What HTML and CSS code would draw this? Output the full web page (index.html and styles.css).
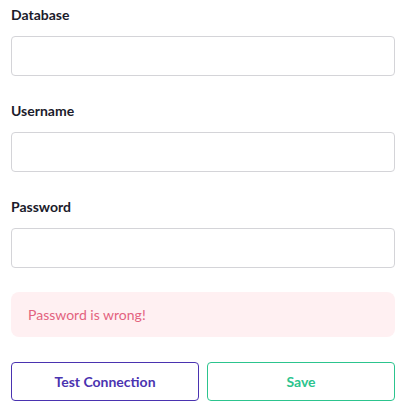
FILE: index.html
```html
<!DOCTYPE html>
<html>
<head>
<meta charset="utf-8">
<link rel="stylesheet" href="styles.css">
</head>
<body>
<form class="form">
  <div class="field">
    <label class="label">Database</label>
    <input class="input" type="text">
  </div>
  <div class="field">
    <label class="label">Username</label>
    <input class="input" type="text">
  </div>
  <div class="field">
    <label class="label">Password</label>
    <input class="input" type="password">
  </div>
  <div class="alert">Password is wrong!</div>
  <div class="actions">
    <button type="button" class="btn btn-test">Test Connection</button>
    <button type="button" class="btn btn-save">Save</button>
  </div>
</form>
</body>
</html>
```
FILE: styles.css
```css
html, body {
  margin: 0;
  padding: 0;
  background: #ffffff;
}
body {
  font-family: Lato, "Open Sans", sans-serif;
}
.form {
  width: 384px;
  padding: 5px 0 0 11px;
  display: flex;
  flex-direction: column;
}
.field {
  display: flex;
  flex-direction: column;
  margin-bottom: 25px;
}
.label {
  font-size: 14px;
  font-weight: 700;
  color: #1b1b2b;
  height: 19px;
  line-height: 19px;
  margin-bottom: 12px;
}
.input {
  box-sizing: border-box;
  width: 384px;
  height: 40px;
  margin: 0;
  border: 1px solid #d4d4d8;
  border-radius: 4px;
  background: #fff;
}
.alert {
  box-sizing: border-box;
  margin-top: -1px;
  height: 45px;
  border-radius: 8px;
  background: #fff0f2;
  color: #e3637f;
  font-size: 14px;
  line-height: 45px;
  padding-left: 17px;
}
.actions {
  display: flex;
  gap: 8px;
  margin-top: 25px;
}
.btn {
  flex: 1;
  box-sizing: border-box;
  height: 39px;
  border-radius: 4px;
  background: #fff;
  font-family: Lato, "Open Sans", sans-serif;
  font-size: 14px;
  font-weight: 700;
  cursor: pointer;
}
.btn-test {
  border: 1px solid #4a33b0;
  color: #4a33b0;
}
.btn-save {
  border: 1px solid #2cc48e;
  color: #2cc48e;
}
```
